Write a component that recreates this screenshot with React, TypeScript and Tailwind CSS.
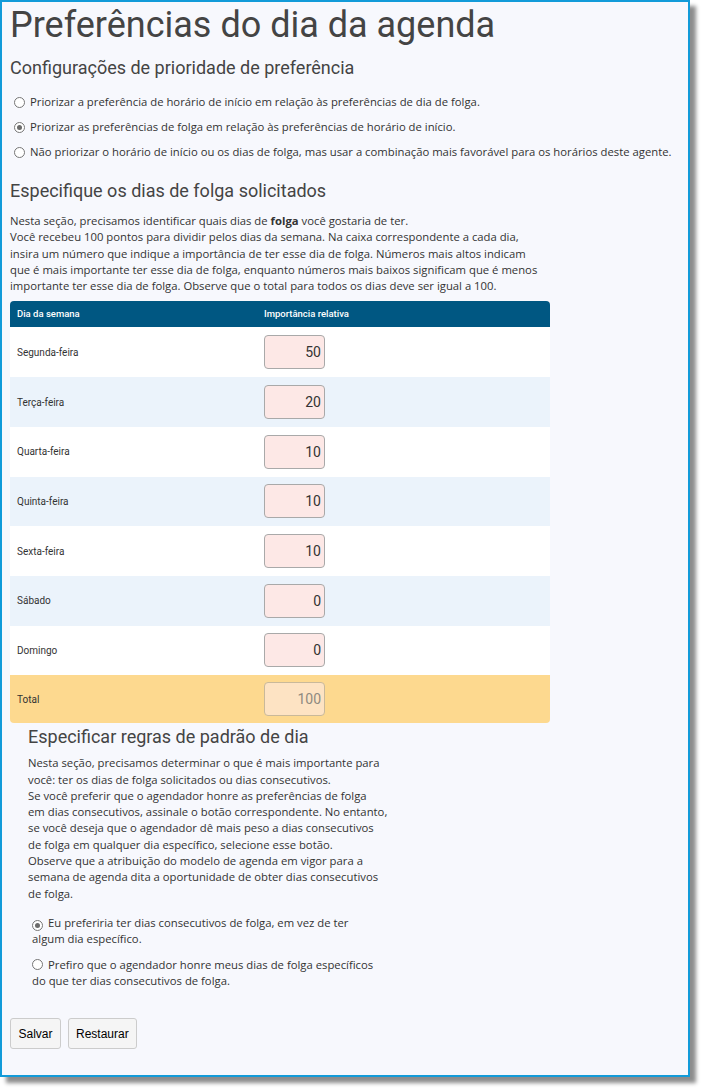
const days = [
  { name: "Segunda-feira", value: "50" },
  { name: "Terça-feira", value: "20" },
  { name: "Quarta-feira", value: "10" },
  { name: "Quinta-feira", value: "10" },
  { name: "Sexta-feira", value: "10" },
  { name: "Sábado", value: "0" },
  { name: "Domingo", value: "0" },
];

const Radio = ({ checked }: { checked?: boolean }) => (
  <span className="mt-[3px] flex h-[11px] w-[11px] shrink-0 items-center justify-center rounded-full border border-[#767676] bg-white">
    {checked && <span className="h-[5px] w-[5px] rounded-full bg-[#6b6b6b]" />}
  </span>
);

const App = () => {
  return (
    <div className="h-[1090px] w-[703px] bg-white font-['Open_Sans',sans-serif] text-[#333]">
      <div className="flex h-[1077px] w-[690px] flex-col border-2 border-[#129bd9] bg-[#f7f8fd] px-[8px] shadow-[6px_6px_4px_rgba(0,0,0,0.45)]">
        <h1 className="mt-[1px] font-['Roboto',sans-serif] text-[36px] leading-[44px] text-[#444]">
          Preferências do dia da agenda
        </h1>
        <h2 className="mt-[10px] font-['Roboto',sans-serif] text-[18px] leading-[22px] text-[#444]">
          Configurações de prioridade de preferência
        </h2>

        <div className="mt-[15px] flex flex-col gap-[9px] pl-[4px] text-[11.3px] leading-[16px]">
          <label className="flex gap-[5px]">
            <Radio />
            <span>Priorizar a preferência de horário de início em relação às preferências de dia de folga.</span>
          </label>
          <label className="flex gap-[5px]">
            <Radio checked />
            <span>Priorizar as preferências de folga em relação às preferências de horário de início.</span>
          </label>
          <label className="flex gap-[5px]">
            <Radio />
            <span>Não priorizar o horário de início ou os dias de folga, mas usar a combinação mais favorável para os horários deste agente.</span>
          </label>
        </div>

        <h2 className="mt-[20px] font-['Roboto',sans-serif] text-[18px] leading-[22px] text-[#444]">
          Especifique os dias de folga solicitados
        </h2>
        <p className="mt-[11px] w-[560px] text-[11.3px] leading-[16.3px]">
          Nesta seção, precisamos identificar quais dias de <b>folga</b> você gostaria de ter.
          <br />
          Você recebeu 100 pontos para dividir pelos dias da semana. Na caixa correspondente a cada dia,
          <br />
          insira um número que indique a importância de ter esse dia de folga. Números mais altos indicam
          <br />
          que é mais importante ter esse dia de folga, enquanto números mais baixos significam que é menos
          <br />
          importante ter esse dia de folga. Observe que o total para todos os dias deve ser igual a 100.
        </p>

        <div className="mt-[7px] w-[540px] font-['Roboto',sans-serif] text-[10px] text-[#333]">
          <div className="grid h-[26px] grid-cols-[247px_1fr] items-center rounded-t-[4px] bg-[#005782] px-[7px] text-[9.5px] font-medium text-white">
            <span>Dia da semana</span>
            <span>Importância relativa</span>
          </div>
          {days.map((d, i) => (
            <div
              key={d.name}
              className={`grid h-[49.7px] grid-cols-[247px_1fr] items-center px-[7px] ${
                i % 2 === 1 ? "bg-[#ebf3fb]" : "bg-white"
              }`}
            >
              <span>{d.name}</span>
              <input
                readOnly
                value={d.value}
                className="h-[34px] w-[61px] rounded-[4px] border border-[#a9a9a9] bg-[#fde8e6] px-[3px] text-right text-[14px] text-[#333] outline-none"
              />
            </div>
          ))}
          <div className="grid h-[48px] grid-cols-[247px_1fr] items-center rounded-b-[4px] bg-[#fdd98f] px-[7px]">
            <span>Total</span>
            <input
              readOnly
              disabled
              value="100"
              className="h-[34px] w-[61px] rounded-[4px] border border-[#c9b99a] bg-[#fde3c3] px-[3px] text-right text-[14px] text-[#8f8a80] outline-none"
            />
          </div>
        </div>

        <div className="ml-[18px] w-[380px]">
          <h2 className="mt-[3px] font-['Roboto',sans-serif] text-[18px] leading-[22px] text-[#444]">
            Especificar regras de padrão de dia
          </h2>
          <p className="mt-[7px] text-[11.3px] leading-[16.3px]">
            Nesta seção, precisamos determinar o que é mais importante para
            <br />
            você: ter os dias de folga solicitados ou dias consecutivos.
            <br />
            Se você preferir que o agendador honre as preferências de folga
            <br />
            em dias consecutivos, assinale o botão correspondente. No entanto,
            <br />
            se você deseja que o agendador dê mais peso a dias consecutivos
            <br />
            de folga em qualquer dia específico, selecione esse botão.
            <br />
            Observe que a atribuição do modelo de agenda em vigor para a
            <br />
            semana de agenda dita a oportunidade de obter dias consecutivos
            <br />
            de folga.
          </p>
          <div className="mt-[13px] flex flex-col gap-[8px] pl-[4px] text-[11.3px] leading-[16.3px]">
            <label className="block">
              <span className="mr-[5px] inline-flex align-[-1px]"><Radio checked /></span>
              Eu preferiria ter dias consecutivos de folga, em vez de ter
              <br />
              algum dia específico.
            </label>
            <label className="block">
              <span className="mr-[5px] inline-flex align-[-1px]"><Radio /></span>
              Prefiro que o agendador honre meus dias de folga específicos
              <br />
              do que ter dias consecutivos de folga.
            </label>
          </div>
        </div>

        <div className="mt-[29px] flex gap-[7px] font-['Liberation_Sans',sans-serif] text-[12px] text-black">
          <button className="h-[31px] rounded-[3px] border border-[#ccc] bg-[#f5f5f5] px-[7.5px]">Salvar</button>
          <button className="h-[31px] rounded-[3px] border border-[#ccc] bg-[#f5f5f5] px-[7px]">Restaurar</button>
        </div>
      </div>
    </div>
  );
};

export default App;
